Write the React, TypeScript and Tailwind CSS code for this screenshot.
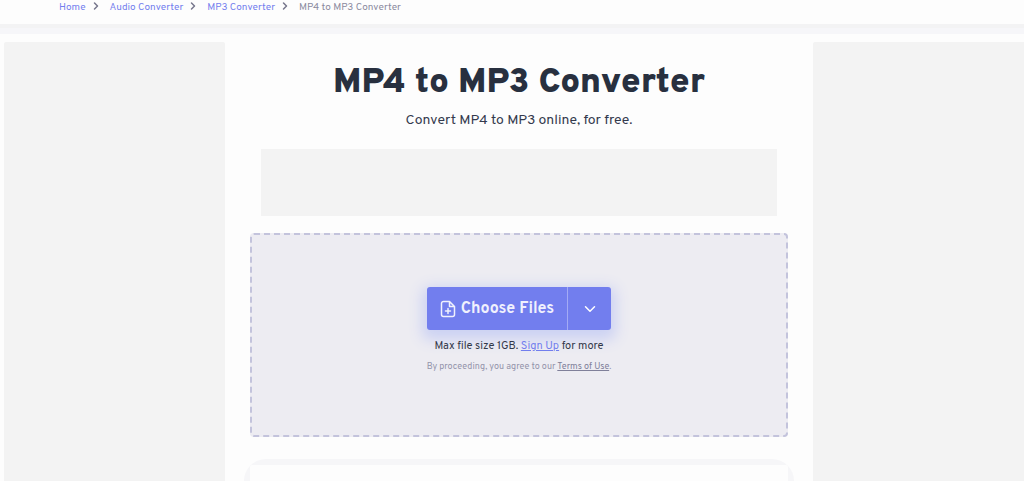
import { ChevronDown, ChevronRight } from "lucide-react";

const crumbs = ["Home", "Audio Converter", "MP3 Converter"];

function Breadcrumbs() {
  return (
    <nav
      aria-label="Breadcrumb"
      className="flex h-6 items-start pl-[59px] text-[10px] leading-4 text-[#8b8b9f]"
    >
      {crumbs.map((crumb) => (
        <div key={crumb} className="flex items-center">
          <a href="#" className="text-[#7480ee]">
            {crumb}
          </a>
          <ChevronRight className="ml-1 mr-2 mb-1 size-3 text-[#77778c]" strokeWidth={3} />
        </div>
      ))}
      <span>MP4 to MP3 Converter</span>
    </nav>
  );
}

function FilePlusIcon() {
  return (
    <svg
      viewBox="0 0 16 18"
      className="h-[18px] w-4"
      fill="none"
      stroke="currentColor"
      strokeWidth="1.5"
      strokeLinecap="round"
      strokeLinejoin="round"
      aria-hidden="true"
    >
      <path d="M9.500 1.500H3.500A2 2 0 0 0 1.500 3.500V14.500A2 2 0 0 0 3.500 16.500H12.500A2 2 0 0 0 14.500 14.500V6.500L9.500 1.500V6.500H14.500" />
      <path d="M8 8.500V13.500M5.500 11H10.500" />
    </svg>
  );
}

function DropZone() {
  return (
    <div className="mx-[25px] mt-[17px] flex h-[204px] flex-col items-center rounded-[4px] border-2 border-dashed border-[#c3c3dc] bg-[#edecf2] pt-[52px]">
      <div className="flex h-[43px] rounded-[3px] bg-[#727eee] text-white shadow-[0_5px_14px_5px_#ccd2f3]">
        <button className="flex w-[140px] items-center justify-center gap-[5px] rounded-l-[3px] text-base font-bold text-[#f0f1fd]">
          <FilePlusIcon />
          Choose Files
        </button>
        <button
          aria-label="More sources"
          className="flex w-11 items-center justify-center border-l border-[#a3abf5]"
        >
          <ChevronDown className="size-[18px]" strokeWidth={2} />
        </button>
      </div>
      <p className="mt-2 text-[11px] leading-4 text-[#33394a]">
        Max file size 1GB.{" "}
        <a href="#" className="text-[#727eee] underline">
          Sign Up
        </a>{" "}
        for more
      </p>
      <p className="mt-[7px] text-[9px] leading-3 text-[#9494ab]">
        By proceeding, you agree to our{" "}
        <a href="#" className="text-[#80809a] underline">
          Terms of Use
        </a>
        .
      </p>
    </div>
  );
}

export default function App() {
  return (
    <div className="flex h-screen flex-col overflow-hidden bg-[#fdfdfd] font-['Overpass',Roboto,sans-serif]">
      <Breadcrumbs />
      <div className="h-[10px] shrink-0 border-t-4 border-[#f3f3f4] bg-[#f6f6f9]" />
      <div className="flex min-h-0 flex-1 pl-1 pt-2">
        <aside className="w-[221px] shrink-0 rounded-t-[2px] bg-[#f3f3f3]" />
        <main className="flex min-w-0 flex-1 flex-col">
          <h1 className="mt-[21px] text-center text-[35px] font-black leading-[40px] text-[#28303f]">
            MP4 to MP3 Converter
          </h1>
          <p className="mt-2 text-center text-sm leading-5 text-[#343a4d]">
            Convert MP4 to MP3 online, for free.
          </p>
          <div className="mx-9 mt-[18px] h-[67px] shrink-0 bg-[#f3f3f3]" />
          <DropZone />
          <div className="mx-[19px] mt-[22px] flex-1 rounded-t-[24px] bg-[#f6f6f8] px-[6px] pt-[6px]">
            <section className="h-full rounded-t-[2px] bg-[#fdfdfd]" />
          </div>
        </main>
        <aside className="w-[211px] shrink-0 rounded-tl-[2px] bg-[#f3f3f3]" />
      </div>
    </div>
  );
}
